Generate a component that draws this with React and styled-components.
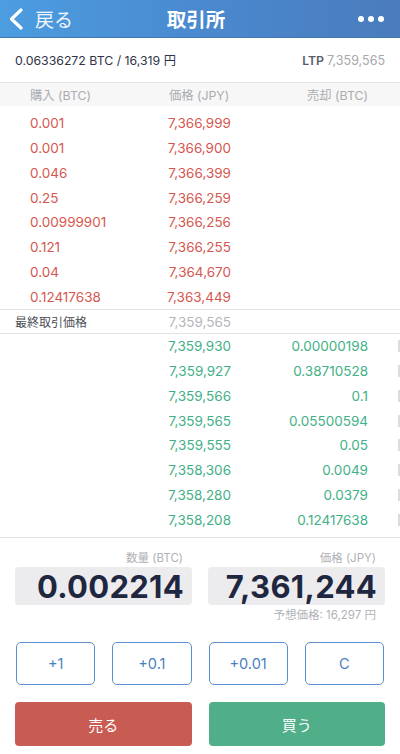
import React from "react";
import styled, { createGlobalStyle } from "styled-components";

const GlobalStyle = createGlobalStyle`
  html, body { margin: 0; padding: 0; background: #fff; }
  body { font-family: Inter, "Noto Sans CJK JP", sans-serif; -webkit-font-smoothing: antialiased; }
  * { box-sizing: border-box; }
`;

const Page = styled.div`
  width: 400px;
  height: 754px;
  display: flex;
  flex-direction: column;
  background: #fff;
  overflow: hidden;
`;

const Header = styled.header`
  height: 38px;
  flex: none;
  display: grid;
  grid-template-columns: 1fr auto 1fr;
  align-items: center;
  padding: 0 16px 0 8px;
  background: linear-gradient(90deg, #4c9de0 0%, #4a89cf 50%, #4a7cbc 100%);
  border-bottom: 1px solid #4476b3;
  color: #fff;
`;

const Back = styled.div`
  display: flex;
  align-items: center;
  gap: 10px;
  font-size: 19px;
  font-family: "Noto Sans CJK JP", sans-serif;
  color: #eef5fc;
`;

const Title = styled.h1`
  margin: 0;
  font-size: 19.5px;
  font-weight: 700;
  font-family: "Noto Sans CJK JP", sans-serif;
`;

const Dots = styled.div`
  justify-self: end;
  display: flex;
  gap: 4px;
  span {
    width: 6px;
    height: 6px;
    border-radius: 50%;
    background: #fff;
  }
`;

const InfoRow = styled.div`
  height: 45px;
  flex: none;
  display: flex;
  align-items: center;
  justify-content: space-between;
  padding: 0 15px 0 15px;
  border-bottom: 1px solid #e6e6e6;
  font-size: 12.3px;
  color: #2f3446;
`;

const Ltp = styled.span`
  color: #5a5e68;
  font-weight: 600;
  span { color: #a6a8ad; font-weight: 400; font-size: 12.5px; }
`;

const ColHeader = styled.div`
  height: 23px;
  flex: none;
  display: grid;
  grid-template-columns: 137px 64px 137px;
  align-items: center;
  padding-left: 30px;
  background: #f7f7f7;
  font-size: 12.3px;
  color: #a9abb0;
  span:nth-child(2) { text-align: center; white-space: nowrap; }
  span:nth-child(3) { text-align: right; }
`;

const Book = styled.div`
  padding: ${(p) => (p.$top ? "5px 0 0" : "0 0 5px")};
  flex: none;
`;

const Row = styled.div`
  height: 24.75px;
  display: grid;
  grid-template-columns: 137px 64px 137px 1fr;
  align-items: center;
  padding-left: 30px;
  font-size: 13.5px;
  color: ${(p) => (p.$side === "buy" ? "#d6574f" : "#42b085")};
  span:nth-child(2), span:nth-child(3) { text-align: right; white-space: nowrap; }
`;

const DepthMark = styled.i`
  justify-self: end;
  width: 2px;
  height: 12px;
  background: #dcdcdc;
`;

const LastRow = styled.div`
  height: 25px;
  flex: none;
  display: grid;
  grid-template-columns: 152px 64px;
  align-items: center;
  padding-left: 15px;
  border-top: 1px solid #e3e3e3;
  border-bottom: 1px solid #e3e3e3;
  span:first-child { font-size: 12px; color: #4a4d55; }
  span:last-child { text-align: right; font-size: 13.5px; color: #b5b6ba; white-space: nowrap; }
`;

const Form = styled.section`
  flex: 1;
  border-top: 1px solid #e3e3e3;
  padding: 12px 15px 0 15px;
  display: flex;
  flex-direction: column;
`;

const Fields = styled.div`
  display: grid;
  grid-template-columns: 1fr 1fr;
  column-gap: 16px;
`;

const Field = styled.div`
  display: flex;
  flex-direction: column;
`;

const FieldLabel = styled.div`
  text-align: right;
  padding-right: 9px;
  font-size: 11.5px;
  color: #b0b2b7;
  height: 17px;
  line-height: 17px;
`;

const ValueBox = styled.div`
  height: 38px;
  border-radius: 4px;
  background: #ececee;
  display: flex;
  align-items: center;
  justify-content: flex-end;
  padding-right: 8px;
  font-size: 31px;
  font-weight: 700;
  color: #1f2740;
  letter-spacing: 0.3px;
`;

const Hint = styled.div`
  text-align: right;
  padding-right: 9px;
  font-size: 11.5px;
  color: #b0b2b7;
  height: 20px;
  line-height: 20px;
`;

const StepRow = styled.div`
  margin-top: 17px;
  display: grid;
  grid-template-columns: repeat(4, 1fr);
  column-gap: 17px;
  padding: 0 1px;
`;

const StepButton = styled.button`
  height: 43px;
  border: 1px solid #5a8fce;
  border-radius: 5px;
  background: #fff;
  color: #4a7fbf;
  font-family: Inter, sans-serif;
  font-size: 14.5px;
`;

const ActionRow = styled.div`
  margin-top: 17px;
  display: grid;
  grid-template-columns: 1fr 1fr;
  column-gap: 17px;
`;

const ActionButton = styled.button`
  height: 44px;
  border: none;
  border-radius: 4px;
  background: ${(p) => (p.$kind === "sell" ? "#c85c53" : "#50ae88")};
  color: #fff;
  font-family: "Noto Sans CJK JP", sans-serif;
  font-size: 15px;
`;

const asks = [
  ["0.001", "7,366,999"],
  ["0.001", "7,366,900"],
  ["0.046", "7,366,399"],
  ["0.25", "7,366,259"],
  ["0.00999901", "7,366,256"],
  ["0.121", "7,366,255"],
  ["0.04", "7,364,670"],
  ["0.12417638", "7,363,449"],
];

const bids = [
  ["7,359,930", "0.00000198"],
  ["7,359,927", "0.38710528"],
  ["7,359,566", "0.1"],
  ["7,359,565", "0.05500594"],
  ["7,359,555", "0.05"],
  ["7,358,306", "0.0049"],
  ["7,358,280", "0.0379"],
  ["7,358,208", "0.12417638"],
];

export default function App() {
  return (
    <Page>
      <GlobalStyle />
      <Header>
        <Back>
          <svg width="17" height="22" viewBox="0 0 17 22">
            <path d="M13 2 L3.5 11 L13 20" fill="none" stroke="#fff" strokeWidth="3.2" strokeLinecap="round" strokeLinejoin="round" />
          </svg>
          <span>戻る</span>
        </Back>
        <Title>取引所</Title>
        <Dots>
          <span />
          <span />
          <span />
        </Dots>
      </Header>
      <InfoRow>
        <span>0.06336272 BTC / 16,319 円</span>
        <Ltp>
          LTP <span>7,359,565</span>
        </Ltp>
      </InfoRow>
      <ColHeader>
        <span>購入 (BTC)</span>
        <span>価格 (JPY)</span>
        <span>売却 (BTC)</span>
      </ColHeader>
      <Book $top>
        {asks.map(([a, p], i) => (
          <Row key={i} $side="buy">
            <span>{a}</span>
            <span>{p}</span>
            <span />
          </Row>
        ))}
      </Book>
      <LastRow>
        <span>最終取引価格</span>
        <span>7,359,565</span>
      </LastRow>
      <Book>
        {bids.map(([p, a], i) => (
          <Row key={i} $side="sell">
            <span />
            <span>{p}</span>
            <span>{a}</span>
            <DepthMark />
          </Row>
        ))}
      </Book>
      <Form>
        <Fields>
          <Field>
            <FieldLabel>数量 (BTC)</FieldLabel>
            <ValueBox>0.002214</ValueBox>
          </Field>
          <Field>
            <FieldLabel>価格 (JPY)</FieldLabel>
            <ValueBox>7,361,244</ValueBox>
            <Hint>予想価格: 16,297 円</Hint>
          </Field>
        </Fields>
        <StepRow>
          <StepButton>+1</StepButton>
          <StepButton>+0.1</StepButton>
          <StepButton>+0.01</StepButton>
          <StepButton>C</StepButton>
        </StepRow>
        <ActionRow>
          <ActionButton $kind="sell">売る</ActionButton>
          <ActionButton $kind="buy">買う</ActionButton>
        </ActionRow>
      </Form>
    </Page>
  );
}
